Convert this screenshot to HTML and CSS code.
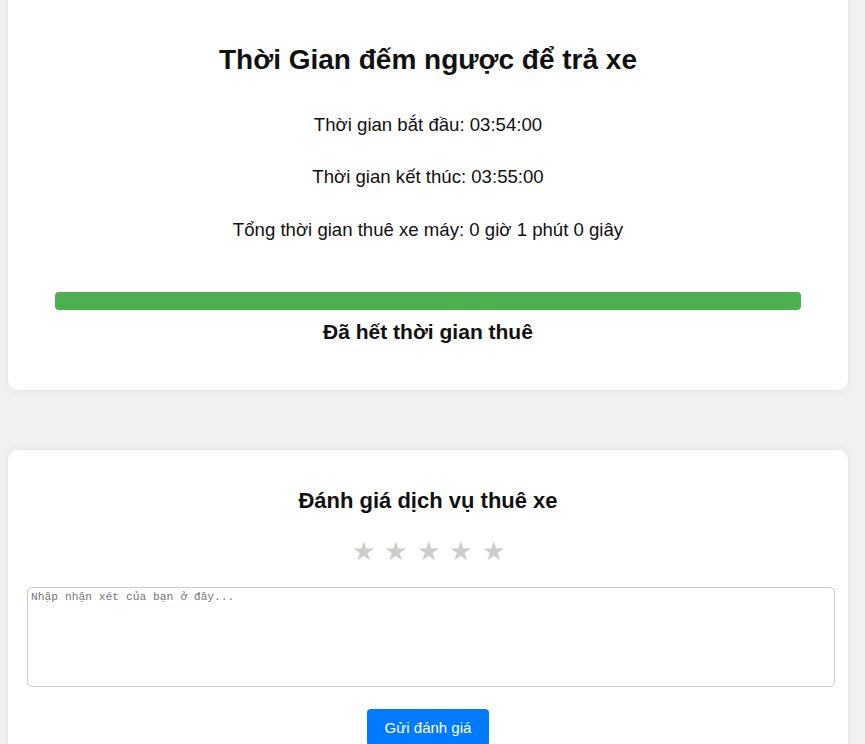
FILE: index.html
```html
<!DOCTYPE html>
<html lang="vi">
<head>
<meta charset="utf-8">
<title>Thời Gian đếm ngược để trả xe</title>
<link rel="stylesheet" href="styles.css">
</head>
<body>
<div class="page">
  <section class="card countdown">
    <h1 class="title">Thời Gian đếm ngược để trả xe</h1>
    <p class="info">Thời gian bắt đầu: 03:54:00</p>
    <p class="info">Thời gian kết thúc: 03:55:00</p>
    <p class="info">Tổng thời gian thuê xe máy: 0 giờ 1 phút 0 giây</p>
    <div class="progress"><div class="progress-fill"></div></div>
    <h2 class="status">Đã hết thời gian thuê</h2>
  </section>
  <section class="card review">
    <h2 class="review-title">Đánh giá dịch vụ thuê xe</h2>
    <div class="stars">
      <span class="star">★</span><span class="star">★</span><span class="star">★</span><span class="star">★</span><span class="star">★</span>
    </div>
    <textarea class="comment" placeholder="Nhập nhận xét của bạn ở đây..."></textarea>
    <div class="actions"><button class="submit">Gửi đánh giá</button></div>
  </section>
</div>
</body>
</html>
```

FILE: styles.css
```css
html, body {
  margin: 0;
  padding: 0;
  background: #f2f2f2;
  font-family: "Liberation Sans", Arial, sans-serif;
  color: #111;
  overflow: hidden;
}
.page {
  width: 840px;
  margin-left: 8px;
  margin-top: -30px;
  display: flex;
  flex-direction: column;
  gap: 60px;
}
.card {
  background: #fff;
  border-radius: 10px;
  box-shadow: 0 0 10px rgba(0,0,0,0.08);
}
.countdown {
  padding: 30px 47px 30px;
  text-align: center;
}
.title {
  font-size: 28px;
  font-weight: bold;
  margin: 44px 0 37.5px;
}
.info {
  font-size: 18.6px;
  margin: 0 0 30.5px;
}
.progress {
  margin-top: 51px;
  height: 18px;
  background: #e0e0e0;
  border-radius: 4px;
  overflow: hidden;
}
.progress-fill {
  width: 100%;
  height: 100%;
  background: #4caf50;
}
.status {
  font-size: 21px;
  margin: 10px 0 16px;
}
.review {
  padding: 20px 19px 40px 19px;
  text-align: center;
}
.review-title {
  font-size: 22px;
  margin: 18px 0 22px;
}
.stars {
  display: flex;
  justify-content: center;
  gap: 9.5px;
  font-size: 26px;
  color: #ccc;
}
.comment {
  display: block;
  box-sizing: border-box;
  width: 808px;
  height: 100px;
  margin-top: 20px;
  border: 1px solid #ccc;
  border-radius: 5px;
  padding: 3px;
  font-family: "Liberation Mono", monospace;
  font-size: 11.3px;
  resize: none;
}
.comment::placeholder {
  color: #777;
}
.actions {
  margin-top: 22px;
}
.submit {
  background: #007bff;
  color: #fff;
  border: none;
  border-radius: 4px;
  font-family: "Liberation Sans", Arial, sans-serif;
  font-size: 15px;
  padding: 10px 18px;
  cursor: pointer;
}
```
